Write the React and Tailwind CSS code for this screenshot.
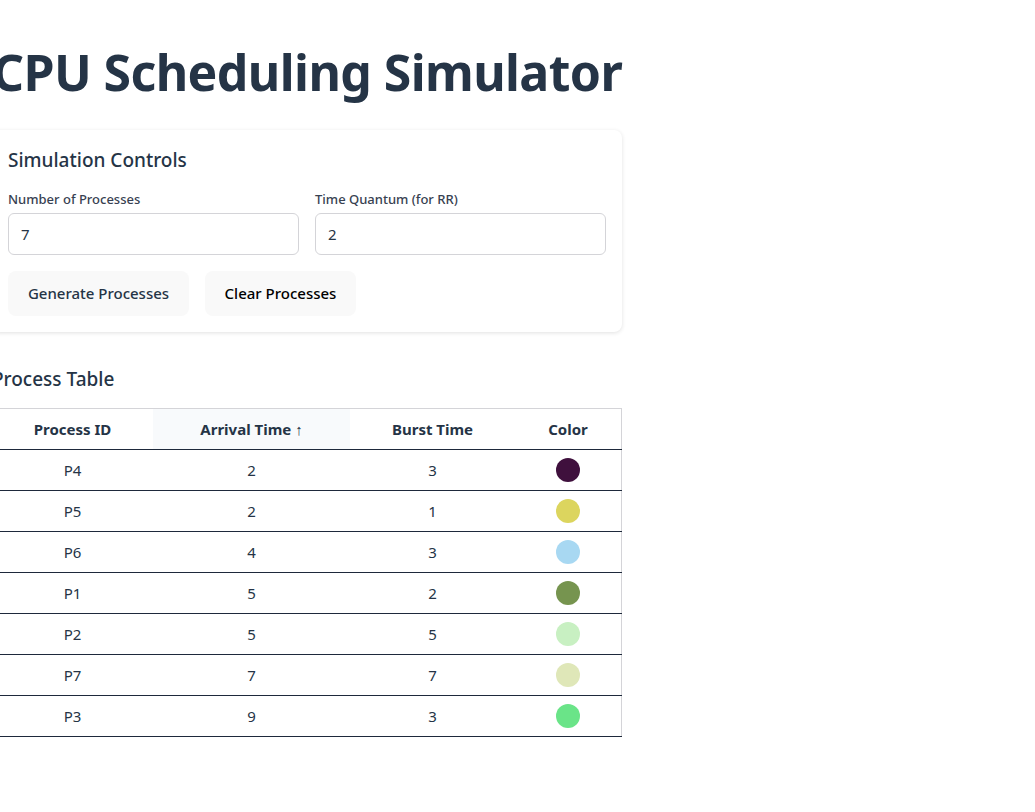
import React from "react";

const rows = [
  { id: "P4", at: 2, bt: 3, color: "#3f103d" },
  { id: "P5", at: 2, bt: 1, color: "#dcd55e" },
  { id: "P6", at: 4, bt: 3, color: "#a8d8f2" },
  { id: "P1", at: 5, bt: 2, color: "#76944f" },
  { id: "P2", at: 5, bt: 5, color: "#c8f0c2" },
  { id: "P7", at: 7, bt: 7, color: "#dfe7b8" },
  { id: "P3", at: 9, bt: 3, color: "#6ae488" },
];

export default function App() {
  return (
    <div
      className="min-h-screen bg-white overflow-hidden"
      style={{ fontFamily: '"Noto Sans", "Open Sans", sans-serif' }}
    >
      <div className="w-[630px] -ml-2 pt-[38px]">
        <h1 className="whitespace-nowrap text-[50px] leading-[68px] font-bold text-[#253446] tracking-[-0.6px]">
          CPU Scheduling Simulator
        </h1>
        <div className="mt-[24px] bg-white rounded-lg shadow-[0_1px_4px_rgba(0,0,0,0.12)] p-4">
          <h2 className="text-[19px] leading-7 font-medium text-[#253446]">Simulation Controls</h2>
          <div className="mt-[15px] grid grid-cols-2 gap-4">
            <div>
              <label className="block text-[13px] leading-5 font-medium text-[#374151]">
                Number of Processes
              </label>
              <div className="mt-[4px] h-[42px] border border-[#d4d4d8] rounded-md px-3 flex items-center text-[15px] text-[#253446]">
                7
              </div>
            </div>
            <div>
              <label className="block text-[13px] leading-5 font-medium text-[#374151]">
                Time Quantum (for RR)
              </label>
              <div className="mt-[4px] h-[42px] border border-[#d4d4d8] rounded-md px-3 flex items-center text-[15px] text-[#253446]">
                2
              </div>
            </div>
          </div>
          <div className="mt-4 flex gap-4">
            <button className="h-[45px] w-[181px] rounded-lg bg-[#f9f9f9] text-[15px] font-medium text-[#253446]">
              Generate Processes
            </button>
            <button className="h-[45px] w-[151px] rounded-lg bg-[#f9f9f9] text-[15px] font-medium text-black">
              Clear Processes
            </button>
          </div>
        </div>
        <h2 className="mt-[33px] text-[19px] leading-7 font-medium text-[#253446]">Process Table</h2>
        <table className="mt-[15px] w-[630px] border-collapse border-t border-r border-[#d4d4d8] text-[15px] text-[#253446]">
          <thead>
            <tr className="h-[41px] border-b border-[#1e293b]">
              <th className="w-[161px] font-bold text-center">Process ID</th>
              <th className="w-[197px] font-bold text-center bg-[#f8fafc]">Arrival Time ↑</th>
              <th className="w-[165px] font-bold text-center">Burst Time</th>
              <th className="font-bold text-center">Color</th>
            </tr>
          </thead>
          <tbody>
            {rows.map((r) => (
              <tr key={r.id} className="h-[41px] border-b border-[#1e293b]">
                <td className="text-center">{r.id}</td>
                <td className="text-center">{r.at}</td>
                <td className="text-center">{r.bt}</td>
                <td className="text-center">
                  <span
                    className="inline-block w-6 h-6 rounded-full align-middle"
                    style={{ backgroundColor: r.color }}
                  />
                </td>
              </tr>
            ))}
          </tbody>
        </table>
      </div>
    </div>
  );
}
